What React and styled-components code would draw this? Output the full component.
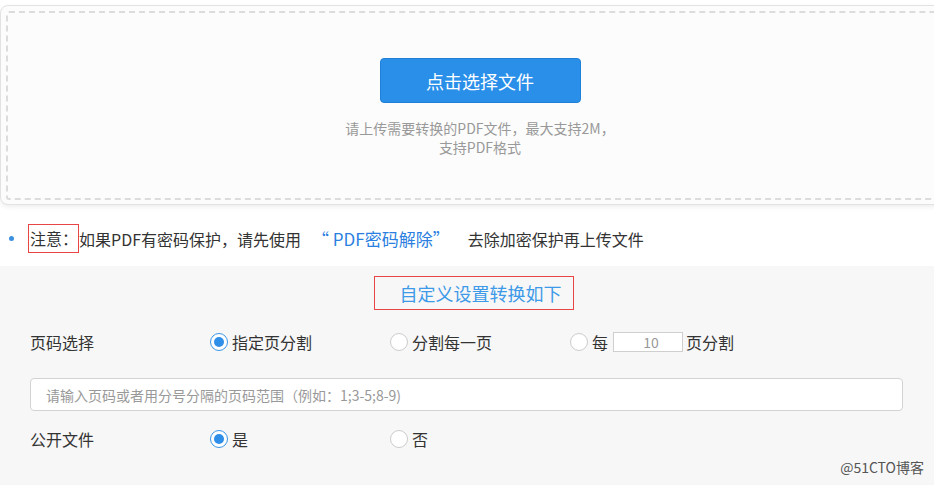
import React from 'react';
import styled, { createGlobalStyle } from 'styled-components';

const GlobalStyle = createGlobalStyle`
    html, body {
        margin: 0;
        padding: 0;
        background: #ffffff;
    }
    body {
        font-family: "Noto Sans CJK SC", "Noto Sans", "Liberation Sans", sans-serif;
        color: #333333;
    }
`;

const Page = styled.div`
    position: relative;
    width: 100%;
    height: 485px;
    overflow: hidden;
`;

const UploadCard = styled.div`
    box-sizing: border-box;
    width: 959px;
    margin-top: 5px;
    padding: 5px 4px 4px 5px;
    background: #fcfcfc;
    border: 1px solid #e2e2e2;
    border-radius: 8px;
    box-shadow: 0 2px 5px rgba(0, 0, 0, 0.07);
`;

const DropZone = styled.div`
    box-sizing: border-box;
    height: 189px;
    border: 2px dashed #dcdcdc;
    border-radius: 3px;
    display: flex;
    flex-direction: column;
    align-items: center;
    padding-top: 45px;
`;

const PickButton = styled.button`
    box-sizing: border-box;
    width: 201px;
    height: 45px;
    background: #2a8fe9;
    border: 1px solid #1f80d8;
    border-radius: 4px;
    color: #ffffff;
    font-family: inherit;
    font-size: 18px;
    cursor: pointer;
`;

const Hint = styled.p`
    margin: 16px 0 0;
    font-size: 14px;
    line-height: 19px;
    color: #999999;
    text-align: center;
`;

const NoticeRow = styled.div`
    display: flex;
    align-items: center;
    height: 29px;
    padding: 19px 0 13px 9px;
    font-size: 16px;
    color: #333333;
    white-space: nowrap;
`;

const Dot = styled.span`
    width: 5px;
    height: 5px;
    border-radius: 50%;
    background: #3d8fe0;
    margin-right: 14px;
`;

const Marked = styled.span`
    display: inline-block;
    box-sizing: border-box;
    border: 1px solid #e84545;
    line-height: 27px;
    padding: 0 0 0 1px;
`;

const PdfLink = styled.a`
    color: #2a7fe0;
    font-size: 17px;
    text-decoration: none;
    margin: 0 18px 0 11px;
`;

const Settings = styled.div`
    background: #f7f7f7;
    padding-top: 10px;
    height: 209px;
`;

const HeadingWrap = styled.div`
    text-align: center;
    padding-left: 13px;
`;

const Heading = styled.span`
    display: inline-block;
    box-sizing: border-box;
    height: 34px;
    line-height: 32px;
    padding: 0 11px 0 25px;
    border: 1px solid #e84545;
    font-size: 18px;
    color: #3d9ae8;
`;

const OptionRow = styled.div`
    display: grid;
    grid-template-columns: 180px 180px 180px auto;
    align-items: center;
    height: 40px;
    padding-left: 30px;
    margin-top: ${props => props.top}px;
    font-size: 16px;
    color: #333333;
`;

const Option = styled.label`
    display: flex;
    align-items: center;
    gap: 4px;
    white-space: nowrap;
`;

const Radio = styled.span`
    position: relative;
    box-sizing: border-box;
    width: 18px;
    height: 18px;
    border-radius: 50%;
    background: #ffffff;
    border: 1px solid ${props => (props.checked ? '#3b95e8' : '#cccccc')};
    &::after {
        content: '';
        display: ${props => (props.checked ? 'block' : 'none')};
        position: absolute;
        left: 3px;
        top: 3px;
        width: 10px;
        height: 10px;
        border-radius: 50%;
        background: #2f8ee8;
    }
`;

const CountBox = styled.span`
    box-sizing: border-box;
    width: 70px;
    height: 20px;
    margin: 0 -1px 0 1px;
    border: 1px solid #cfcfcf;
    background: #ffffff;
    color: #999999;
    font-size: 14px;
    line-height: 18px;
    text-align: center;
    padding-left: 6px;
`;

const RangeInput = styled.input`
    display: block;
    box-sizing: border-box;
    width: calc(100% - 61px);
    height: 33px;
    margin: 16px 31px 0 30px;
    padding: 0 15px;
    border: 1px solid #d3d3d3;
    border-radius: 4px;
    background: #ffffff;
    font-family: inherit;
    font-size: 14px;
    &::placeholder {
        color: #999999;
    }
`;

const Watermark = styled.span`
    position: absolute;
    right: 10px;
    top: 457px;
    font-size: 14px;
    color: #555555;
`;

export default function App() {
    return (
        <Page>
            <GlobalStyle />
            <UploadCard>
                <DropZone>
                    <PickButton>点击选择文件</PickButton>
                    <Hint>请上传需要转换的PDF文件，最大支持2M，<br />支持PDF格式</Hint>
                </DropZone>
            </UploadCard>

            <NoticeRow>
                <Dot />
                <Marked>注意：</Marked>
                如果PDF有密码保护，请先使用
                <PdfLink href="#">“ PDF密码解除”</PdfLink>
                去除加密保护再上传文件
            </NoticeRow>

            <Settings>
                <HeadingWrap>
                    <Heading>自定义设置转换如下</Heading>
                </HeadingWrap>

                <OptionRow top={12}>
                    <span>页码选择</span>
                    <Option><Radio checked />指定页分割</Option>
                    <Option><Radio />分割每一页</Option>
                    <Option><Radio />每<CountBox>10</CountBox>页分割</Option>
                </OptionRow>

                <RangeInput placeholder="请输入页码或者用分号分隔的页码范围（例如：1;3-5;8-9)" />

                <OptionRow top={8}>
                    <span>公开文件</span>
                    <Option><Radio checked />是</Option>
                    <Option><Radio />否</Option>
                </OptionRow>
            </Settings>

            <Watermark>@51CTO博客</Watermark>
        </Page>
    );
}
